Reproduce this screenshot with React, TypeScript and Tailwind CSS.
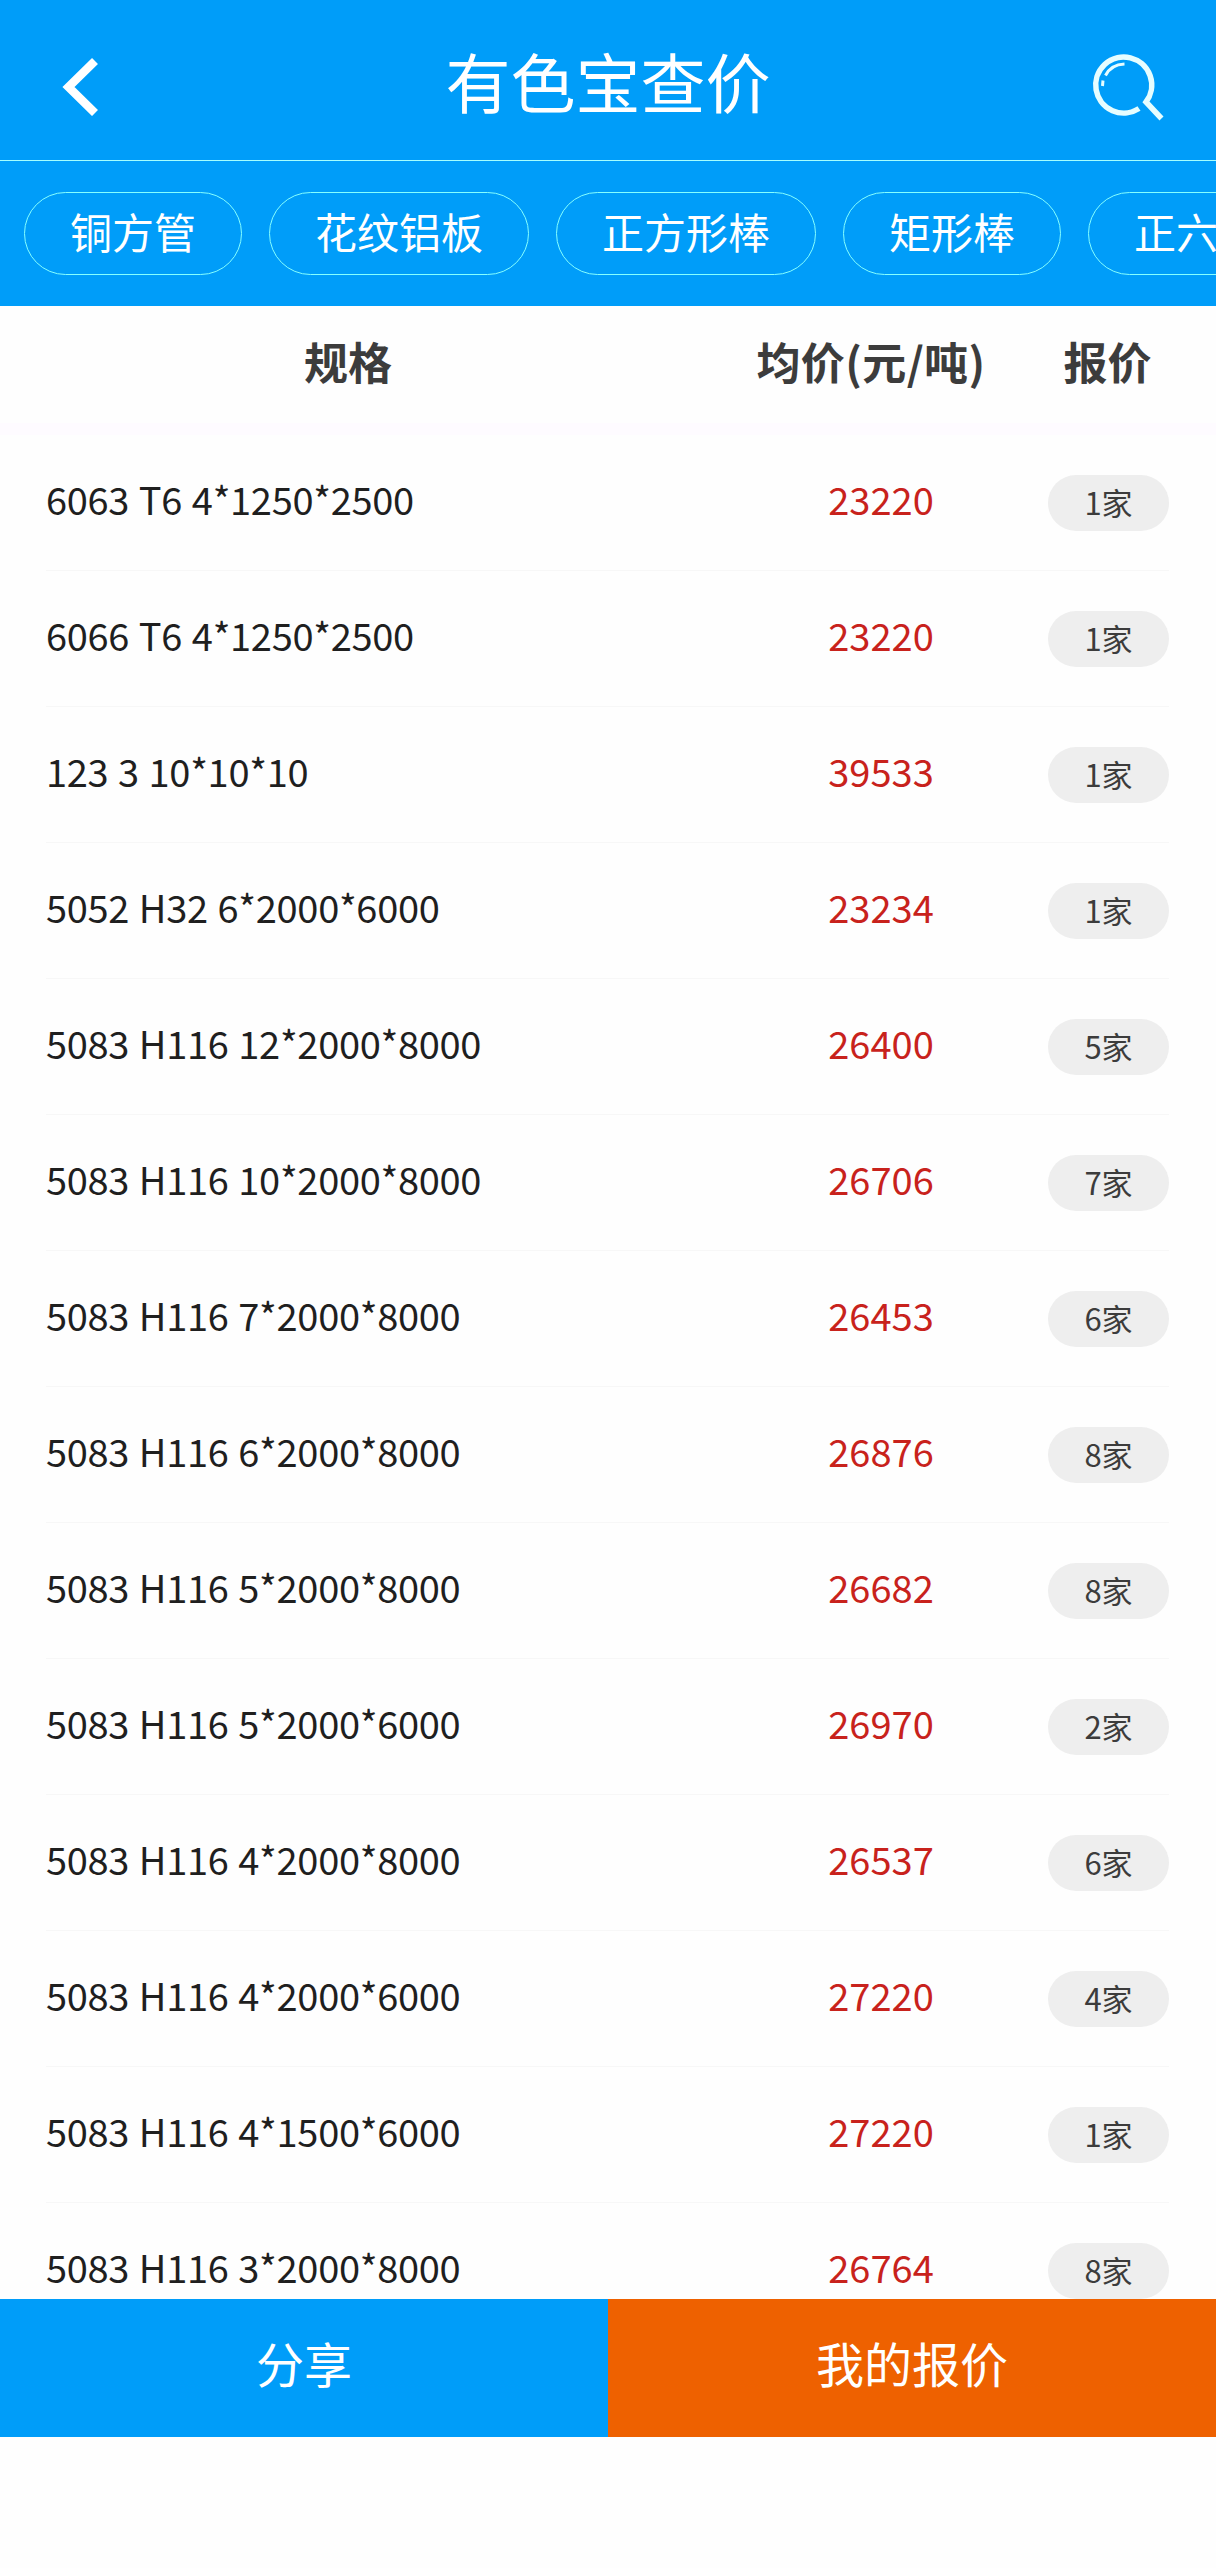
const categories = ["铜方管", "花纹铝板", "正方形棒", "矩形棒", "正六角棒"];

const rows = [
    { spec: "6063 T6 4*1250*2500", price: 23220, quotes: 1 },
    { spec: "6066 T6 4*1250*2500", price: 23220, quotes: 1 },
    { spec: "123 3 10*10*10", price: 39533, quotes: 1 },
    { spec: "5052 H32 6*2000*6000", price: 23234, quotes: 1 },
    { spec: "5083 H116 12*2000*8000", price: 26400, quotes: 5 },
    { spec: "5083 H116 10*2000*8000", price: 26706, quotes: 7 },
    { spec: "5083 H116 7*2000*8000", price: 26453, quotes: 6 },
    { spec: "5083 H116 6*2000*8000", price: 26876, quotes: 8 },
    { spec: "5083 H116 5*2000*8000", price: 26682, quotes: 8 },
    { spec: "5083 H116 5*2000*6000", price: 26970, quotes: 2 },
    { spec: "5083 H116 4*2000*8000", price: 26537, quotes: 6 },
    { spec: "5083 H116 4*2000*6000", price: 27220, quotes: 4 },
    { spec: "5083 H116 4*1500*6000", price: 27220, quotes: 1 },
    { spec: "5083 H116 3*2000*8000", price: 26764, quotes: 8 },
];

function Header() {
    return (
        <header className="flex h-[161px] shrink-0 items-center justify-between border-b border-[#a5ffff] bg-[#009df9] pt-3 pr-[50px] pb-1 pl-[60px]">
            <button aria-label="返回" className="w-16">
                <svg width="44" height="64" viewBox="0 0 44 64" fill="none" stroke="white" strokeWidth="8.5">
                    <path d="M35 9 8.5 35 35 61" />
                </svg>
            </button>
            <h1 className="pb-[7px] text-[65px] leading-none text-white">有色宝查价</h1>
            <button aria-label="搜索">
                <svg width="74" height="74" viewBox="0 0 74 74" fill="none" stroke="#e6fdff" strokeWidth="5.5">
                    <path d="M47 61.5A28 28 0 1 1 54 55L69.5 71.5" />
                    <path d="M13.5 28.5Q19 17.5 32.5 17M11 33.5 10.5 39" strokeWidth="3" />
                </svg>
            </button>
        </header>
    );
}

function CategoryBar() {
    return (
        <nav className="flex h-[145px] shrink-0 items-center gap-[27px] overflow-hidden bg-[#009df9] pl-6">
            {categories.map((name) => (
                <button
                    key={name}
                    className="h-[83px] shrink-0 rounded-full border border-[#86ffff] px-[45px] pb-[6px] text-[42px] leading-none text-white"
                >
                    {name}
                </button>
            ))}
        </nav>
    );
}

export default function App() {
    return (
        <div className="flex h-[2568px] w-[1216px] flex-col overflow-hidden bg-[#fefefe] font-['Noto_Sans_CJK_SC',sans-serif]">
            <Header />
            <CategoryBar />

            {/* Column titles */}
            <div className="flex h-[129px] shrink-0 items-center border-b-[12px] border-[#fefbff] pb-2 text-[44px] leading-none font-bold text-[#3c3c3c]">
                <div className="w-[696px] text-center">规格</div>
                <div className="w-[350px] text-center tracking-[0.4px]">均价(元/吨)</div>
                <div className="w-[123px] text-center">报价</div>
            </div>

            {/* Price list */}
            <div className="h-[1864px] shrink-0 overflow-hidden pr-[47px] pl-[46px]">
                {rows.map((row) => (
                    <div key={row.spec} className="flex h-[136px] items-center border-b border-[#f7f7f7] text-[38px] leading-none">
                        <div className="w-[668px] pb-2 tracking-[-0.3px] [word-spacing:1.5px] text-[#1f1f1f]">{row.spec}</div>
                        <div className="w-[334px] pb-2 text-center text-[#c8221c]">{row.price}</div>
                        <div className="flex h-14 w-[121px] items-center justify-center rounded-full bg-[#eeeeee] pb-[3px] text-[31px] text-[#3c3c3c]">
                            {row.quotes}家
                        </div>
                    </div>
                ))}
            </div>

            {/* Actions */}
            <footer className="flex h-[138px] shrink-0 text-5xl text-white">
                <button className="flex-1 bg-[#009df9] pb-3">分享</button>
                <button className="flex-1 bg-[#ee6100] pb-3">我的报价</button>
            </footer>
        </div>
    );
}
